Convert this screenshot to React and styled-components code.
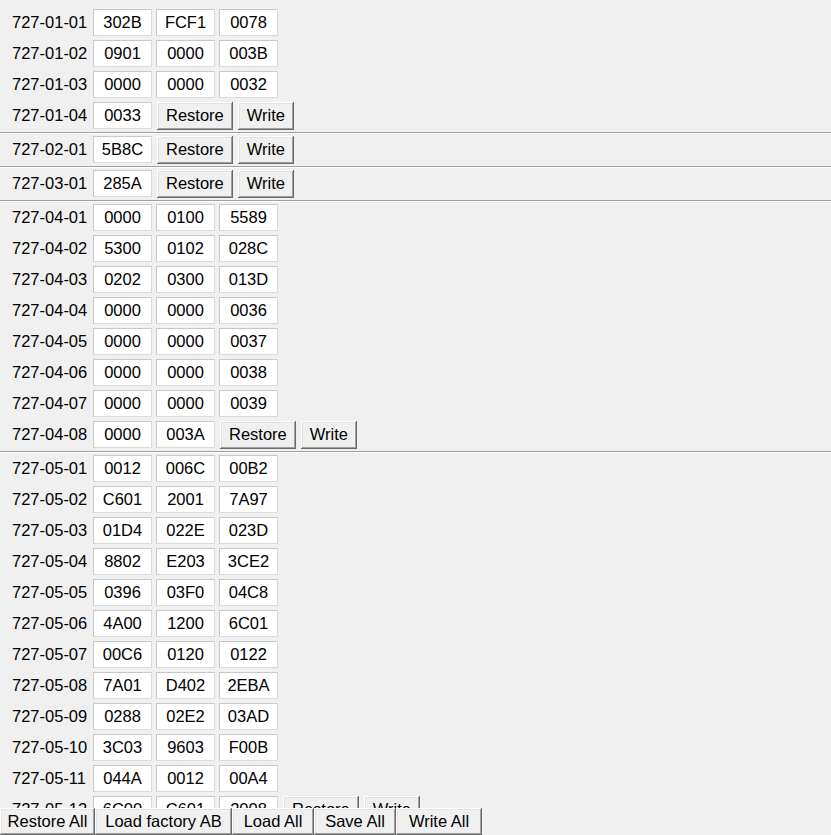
import React from "react";
import styled, { createGlobalStyle } from "styled-components";

const GlobalStyle = createGlobalStyle`
  html, body {
    margin: 0;
    padding: 0;
    background: #f0f0f0;
    overflow: hidden;
  }
  body {
    font-family: "Liberation Sans", Arial, sans-serif;
    font-size: 16.5px;
    color: #000;
  }
`;

const Window = styled.div`
  display: flex;
  flex-direction: column;
  height: 100vh;
  background: #f0f0f0;
`;

const Content = styled.div`
  flex: 1;
  min-height: 0;
  overflow: hidden;
  padding-top: 7px;
`;

const Group = styled.div`
  display: flex;
  flex-direction: column;
  padding-bottom: 1px;
`;

const Separator = styled.div`
  height: 1px;
  background: #a0a0a0;
  border-bottom: 1px solid #ffffff;
`;

const Row = styled.div`
  display: flex;
  align-items: center;
  gap: 4px;
  height: 31px;
`;

const Label = styled.div`
  width: 89px;
  box-sizing: border-box;
  padding-left: 12px;
  white-space: nowrap;
  line-height: 1;
`;

const Entry = styled.div`
  width: 59px;
  height: 27px;
  box-sizing: border-box;
  background: #ffffff;
  border: 1px solid #dadada;
  border-top-color: #c8c8c8;
  border-left-color: #c8c8c8;
  display: flex;
  align-items: center;
  justify-content: center;
  line-height: 1;
`;

const Button = styled.button`
  font: inherit;
  color: #000;
  height: 28px;
  margin-left: 1px;
  padding: 0 9px;
  background: #f0f0f0;
  border: none;
  box-shadow: inset -1px -1px #696969, inset 1px 1px #ffffff,
    inset -2px -2px #a0a0a0, inset 2px 2px #e3e3e3;
  line-height: 1;
  white-space: nowrap;
`;

const Bar = styled.div`
  display: flex;
  height: 27px;
  background: #f0f0f0;
  flex-shrink: 0;
`;

const BarButton = styled(Button)`
  height: 27px;
  margin: 0;
  padding: 0;
  width: ${(p) => p.$w}px;
`;

const groups = [
  [
    ["727-01-01", ["302B", "FCF1", "0078"]],
    ["727-01-02", ["0901", "0000", "003B"]],
    ["727-01-03", ["0000", "0000", "0032"]],
    ["727-01-04", ["0033"], true],
  ],
  [["727-02-01", ["5B8C"], true]],
  [["727-03-01", ["285A"], true]],
  [
    ["727-04-01", ["0000", "0100", "5589"]],
    ["727-04-02", ["5300", "0102", "028C"]],
    ["727-04-03", ["0202", "0300", "013D"]],
    ["727-04-04", ["0000", "0000", "0036"]],
    ["727-04-05", ["0000", "0000", "0037"]],
    ["727-04-06", ["0000", "0000", "0038"]],
    ["727-04-07", ["0000", "0000", "0039"]],
    ["727-04-08", ["0000", "003A"], true],
  ],
  [
    ["727-05-01", ["0012", "006C", "00B2"]],
    ["727-05-02", ["C601", "2001", "7A97"]],
    ["727-05-03", ["01D4", "022E", "023D"]],
    ["727-05-04", ["8802", "E203", "3CE2"]],
    ["727-05-05", ["0396", "03F0", "04C8"]],
    ["727-05-06", ["4A00", "1200", "6C01"]],
    ["727-05-07", ["00C6", "0120", "0122"]],
    ["727-05-08", ["7A01", "D402", "2EBA"]],
    ["727-05-09", ["0288", "02E2", "03AD"]],
    ["727-05-10", ["3C03", "9603", "F00B"]],
    ["727-05-11", ["044A", "0012", "00A4"]],
    ["727-05-12", ["6C00", "C601", "2008"], true],
  ],
];

const barButtons = [
  ["Restore All", 95],
  ["Load factory AB", 137],
  ["Load All", 82],
  ["Save All", 82],
  ["Write All", 86],
];

const App = () => {
  return (
    <Window>
      <GlobalStyle />
      <Content>
        {groups.map((rows, gi) => (
          <React.Fragment key={gi}>
            {gi > 0 && <Separator />}
            <Group>
              {rows.map(([name, values, hasButtons]) => (
                <Row key={name}>
                  <Label>{name}</Label>
                  {values.map((v, i) => (
                    <Entry key={i}>{v}</Entry>
                  ))}
                  {hasButtons && (
                    <>
                      <Button>Restore</Button>
                      <Button>Write</Button>
                    </>
                  )}
                </Row>
              ))}
            </Group>
          </React.Fragment>
        ))}
      </Content>
      <Bar>
        {barButtons.map(([text, w]) => (
          <BarButton key={text} $w={w}>
            {text}
          </BarButton>
        ))}
      </Bar>
    </Window>
  );
};

export default App;
